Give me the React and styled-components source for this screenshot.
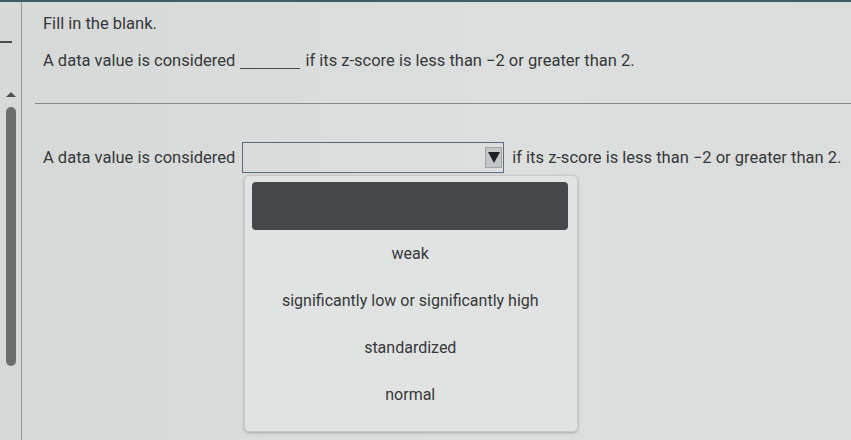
import styled, { createGlobalStyle } from "styled-components";

const GlobalStyle = createGlobalStyle`
  body {
    margin: 0;
    background: #d9dcdb;
    font-family: Roboto, "Liberation Sans", Arial, sans-serif;
    color: #36383a;
  }
`;

const options = [
  "weak",
  "significantly low or significantly high",
  "standardized",
  "normal",
];

const App = () => {
  return (
    <>
      <GlobalStyle />
      <Page>
        <Gutter>
          <Dash />
          <UpArrow />
          <Thumb />
        </Gutter>
        <Main>
          <Title>Fill in the blank.</Title>
          <Question>
            A data value is considered <Blank /> if its z-score is less than −2
            or greater than 2.
          </Question>
          <Separator />
          <AnswerRow>
            <span>A data value is considered</span>
            <SelectWrap>
              <SelectBox>
                <ArrowButton>
                  <Triangle />
                </ArrowButton>
              </SelectBox>
              <Menu>
                <Highlight />
                {options.map((o) => (
                  <Option key={o}>{o}</Option>
                ))}
              </Menu>
            </SelectWrap>
            <span>if its z-score is less than −2 or greater than 2.</span>
          </AnswerRow>
        </Main>
      </Page>
    </>
  );
};

const Page = styled.div`
  display: flex;
  height: 438px;
  overflow: hidden;
  border-top: 2px solid #3f5d65;
  background: linear-gradient(90deg, #d6d9d7 0%, #dcdfdd 60%, #dadddc 100%);
`;

const Gutter = styled.div`
  width: 21px;
  flex-shrink: 0;
  border-right: 1px solid #9a9d9d;
  display: flex;
  flex-direction: column;
  align-items: flex-start;
`;

const Dash = styled.div`
  width: 12px;
  height: 2px;
  background: #4a4c4d;
  margin-top: 39px;
`;

const UpArrow = styled.div`
  width: 0;
  height: 0;
  margin: 49px 0 0 6px;
  border-left: 5px solid transparent;
  border-right: 5px solid transparent;
  border-bottom: 5px solid #4e5051;
`;

const Thumb = styled.div`
  width: 10px;
  height: 259px;
  margin: 10px 0 0 6px;
  border-radius: 5px;
  background: #6c6e6e;
`;

const Main = styled.div`
  flex: 1;
  padding-top: 12px;
  font-size: 16.5px;
`;

const Title = styled.div`
  line-height: 20px;
  padding-left: 21px;
`;

const Question = styled.div`
  line-height: 20px;
  margin-top: 17px;
  padding-left: 21px;
  white-space: pre;
`;

const Blank = styled.span`
  display: inline-block;
  width: 60px;
  border-bottom: 1px solid #45474a;
  margin: 0 1px;
  vertical-align: -3px;
`;

const Separator = styled.div`
  height: 1px;
  background: #868a8c;
  margin: 32px 0 0 13px;
`;

const AnswerRow = styled.div`
  display: flex;
  align-items: center;
  gap: 7px;
  height: 31px;
  margin-top: 38px;
  padding-left: 21px;
  white-space: pre;
`;

const SelectWrap = styled.div`
  position: relative;
  margin-right: 1px;
`;

const SelectBox = styled.div`
  box-sizing: border-box;
  width: 262px;
  height: 31px;
  border: 1px solid #5b6b86;
  display: flex;
  justify-content: flex-end;
  align-items: center;
  padding-right: 1px;
`;

const ArrowButton = styled.div`
  box-sizing: border-box;
  width: 17px;
  height: 21px;
  background: #c3c6c6;
  border: 1px solid #a2a5a5;
  display: flex;
  justify-content: center;
  align-items: center;
`;

const Triangle = styled.div`
  width: 0;
  height: 0;
  border-left: 6px solid transparent;
  border-right: 6px solid transparent;
  border-top: 11px solid #1e1f20;
`;

const Menu = styled.div`
  position: absolute;
  left: 2px;
  top: 33px;
  box-sizing: border-box;
  width: 334px;
  height: 257px;
  padding: 6px 9px 0 7px;
  background: #e1e3e2;
  border: 1px solid #c9cbca;
  border-radius: 5px;
  box-shadow: 0 1px 3px rgba(0, 0, 0, 0.25);
  display: flex;
  flex-direction: column;
  z-index: 2;
`;

const Highlight = styled.div`
  height: 48px;
  flex-shrink: 0;
  border-radius: 4px;
  background: #45494b;
`;

const Option = styled.div`
  height: 47px;
  flex-shrink: 0;
  display: flex;
  align-items: center;
  justify-content: center;
  font-size: 16px;
  color: #36383a;
`;

export default App;
